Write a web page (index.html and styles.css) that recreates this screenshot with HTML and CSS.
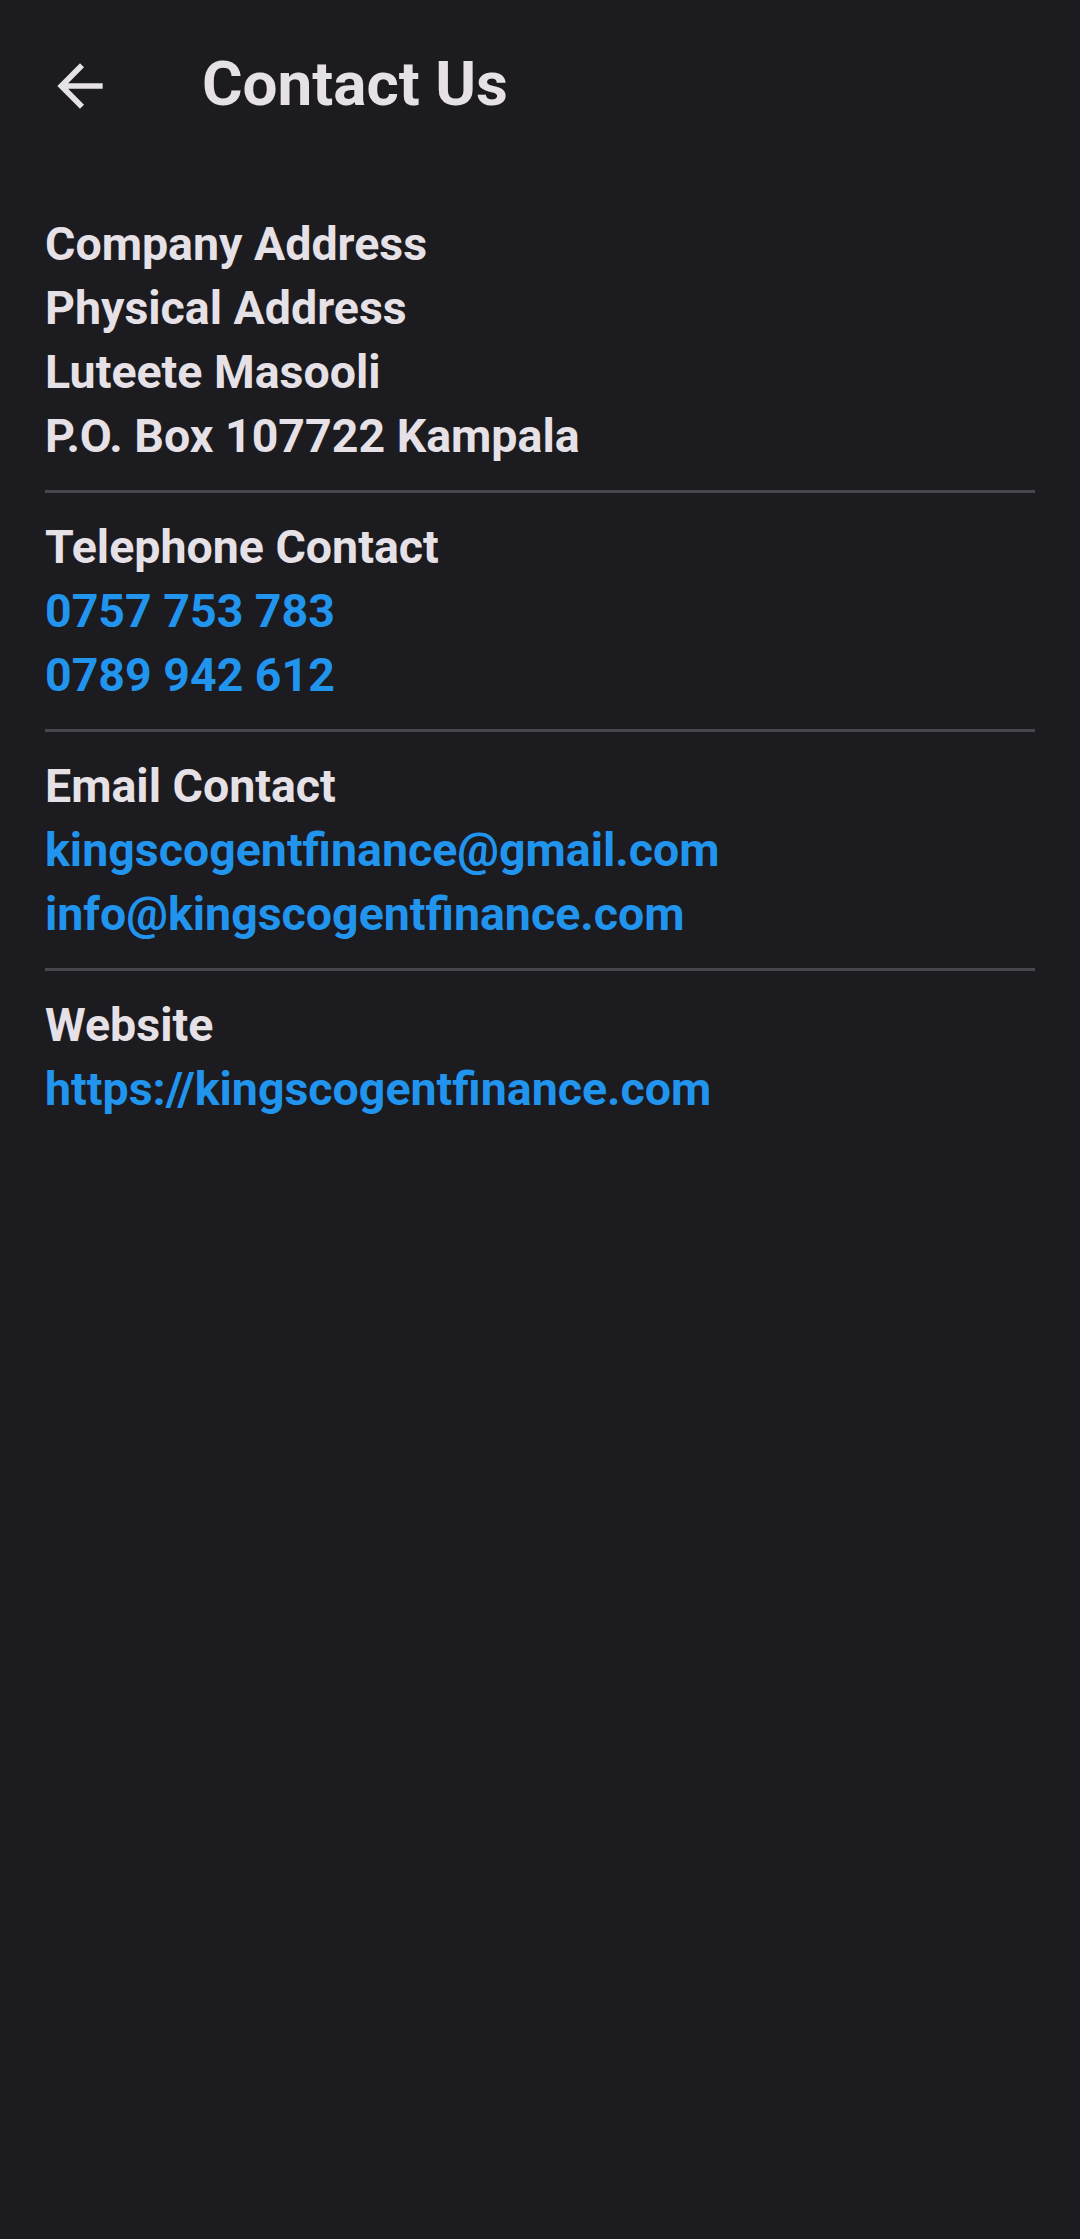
FILE: index.html
```html
<!DOCTYPE html>
<html lang="en">
<head>
<meta charset="utf-8">
<title>Contact Us</title>
<link rel="stylesheet" href="styles.css">
</head>
<body>
<div class="screen">
  <header class="topbar">
    <button class="back" aria-label="Back">
      <svg class="back-icon" viewBox="0 -960 960 960" width="68" height="68" aria-hidden="true">
        <path d="M313-440l224 224-57 56-320-320 320-320 57 56-224 224h487v80H313Z" fill="currentColor"/>
      </svg>
    </button>
    <h1 class="title">Contact Us</h1>
  </header>
  <main class="content">
    <section class="block">
      <p class="line">Company Address</p>
      <p class="line">Physical Address</p>
      <p class="line">Luteete Masooli</p>
      <p class="line">P.O. Box 107722 Kampala</p>
    </section>
    <hr class="divider">
    <section class="block">
      <p class="line">Telephone Contact</p>
      <a class="line link" href="#">0757 753 783</a>
      <a class="line link" href="#">0789 942 612</a>
    </section>
    <hr class="divider">
    <section class="block">
      <p class="line">Email Contact</p>
      <a class="line link" href="#">kingscogentfinance@gmail.com</a>
      <a class="line link" href="#">info@kingscogentfinance.com</a>
    </section>
    <hr class="divider">
    <section class="block">
      <p class="line">Website</p>
      <a class="line link" href="#">https://kingscogentfinance.com</a>
    </section>
  </main>
</div>
</body>
</html>
```
FILE: styles.css
```css
* { box-sizing: border-box; }
html, body {
  margin: 0;
  padding: 0;
  background: #1c1b20;
}
body {
  font-family: Roboto, "Noto Sans", "Liberation Sans", sans-serif;
  color: #e6e1e6;
}
.screen {
  width: 1080px;
  min-height: 2239px;
  background: #1c1b20;
}
.topbar {
  height: 166px;
  display: flex;
  align-items: center;
}
.back {
  width: 68px;
  height: 68px;
  margin-left: 46px;
  margin-top: 6px;
  padding: 0;
  border: 0;
  background: none;
  color: #e6e1e6;
  display: flex;
}
.back-icon { display: block; }
.title {
  margin: 0 0 0 88px;
  font-size: 62px;
  font-weight: 700;
  line-height: normal;
  color: #e6e1e6;
}
.content {
  padding: 46px 45px 0 45px;
}
.block {
  display: flex;
  flex-direction: column;
}
.divider {
  border: 0;
  height: 3px;
  background: #48474d;
  margin: 22px 0;
}
.line {
  margin: 0;
  font-size: 46.5px;
  font-weight: 700;
  line-height: 64px;
  color: #e6e1e6;
  text-decoration: none;
}
.link { color: #2194ee; }
```
